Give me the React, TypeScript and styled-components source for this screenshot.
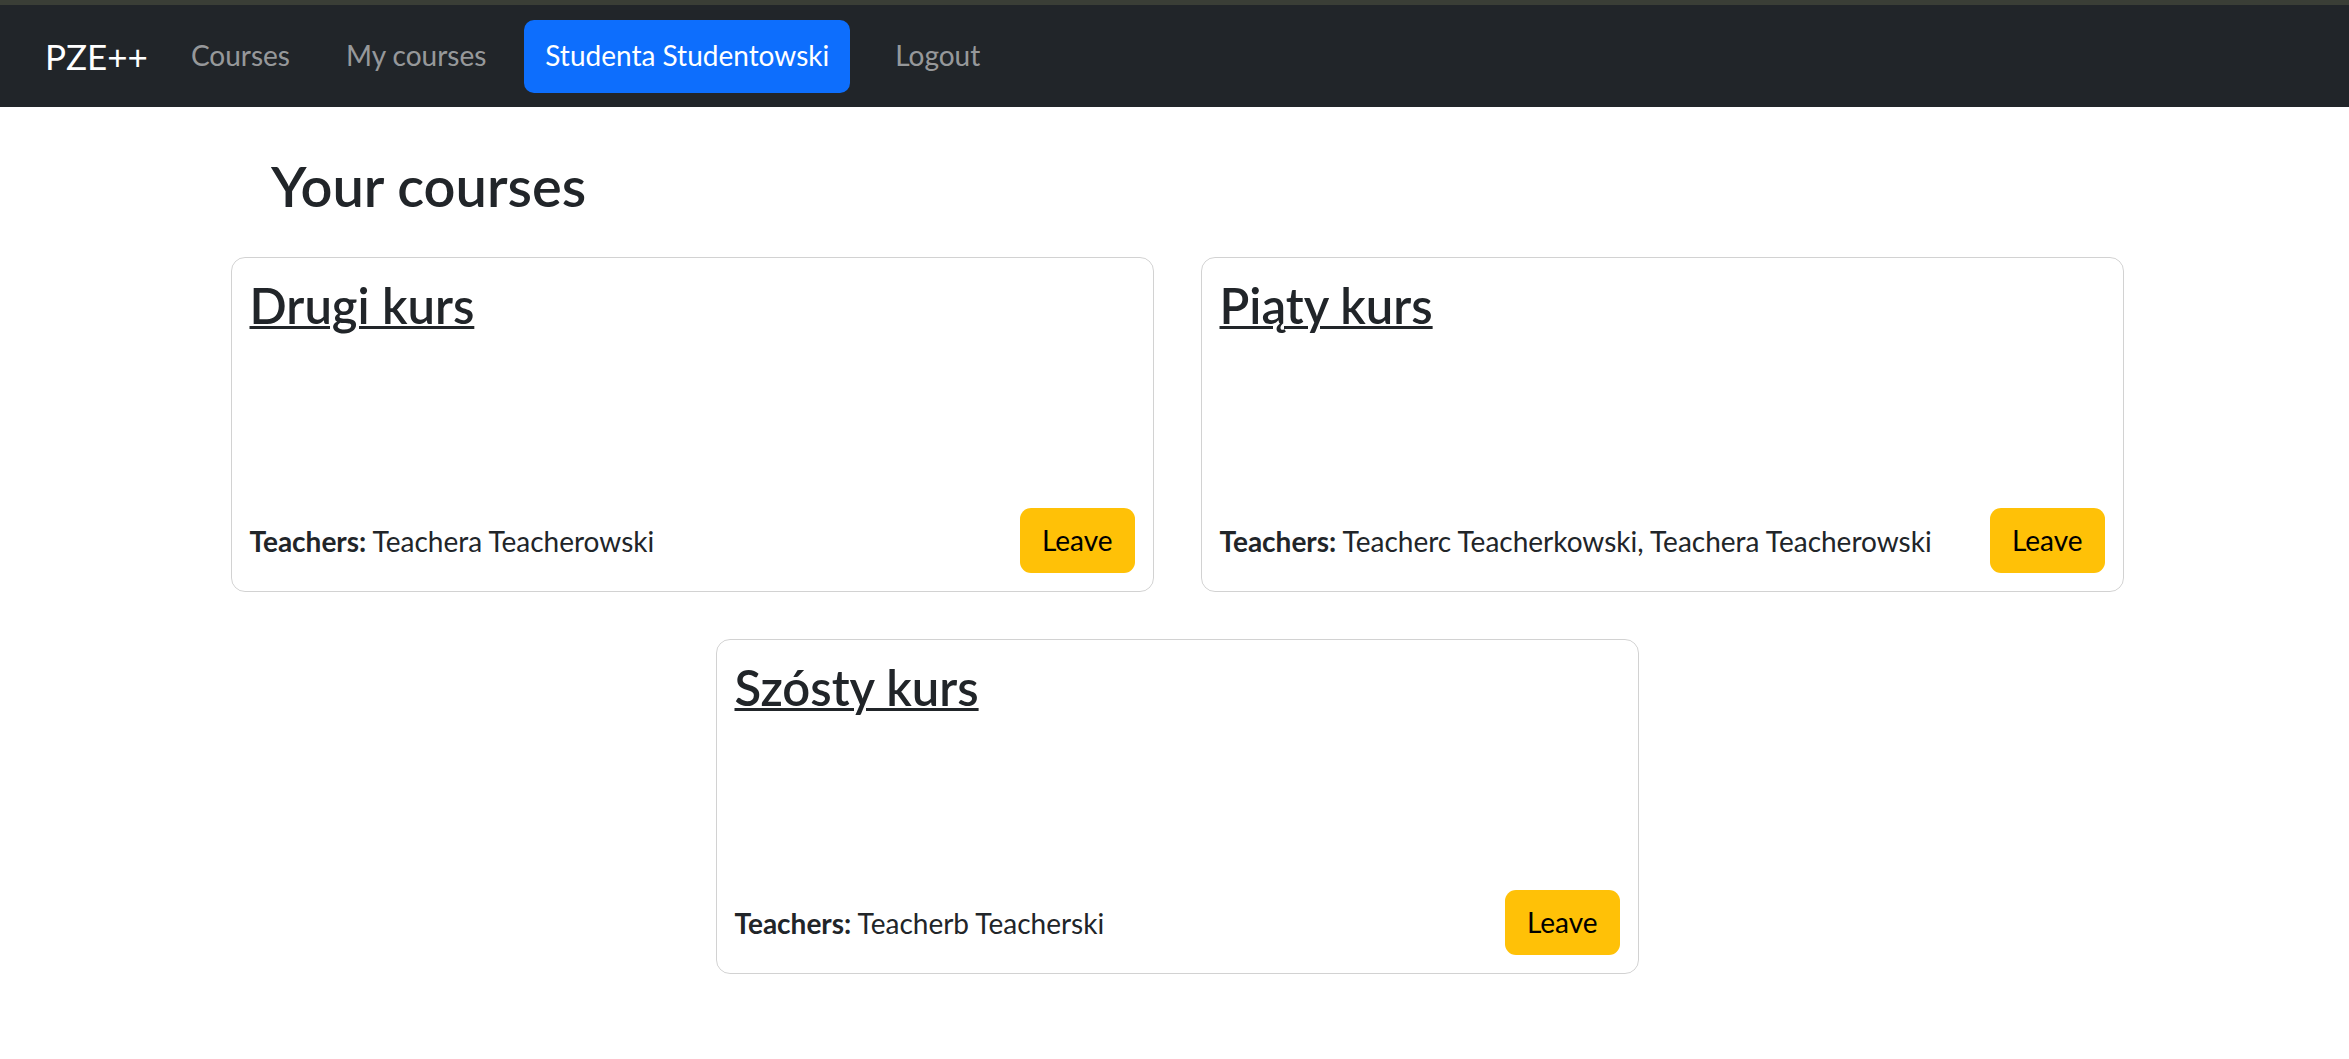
import React from "react";
import styled, { createGlobalStyle } from "styled-components";

const GlobalStyle = createGlobalStyle`
  * {
    box-sizing: border-box;
  }

  html,
  body {
    margin: 0;
    padding: 0;
    background: #fff;
  }

  body {
    font-family: Lato, "Noto Sans", sans-serif;
    font-size: 28px;
    line-height: 1.2;
    color: #212529;
  }
`;

const TopEdge = styled.div`
  height: 5px;
  background-color: #3a3e36;
`;

const Navbar = styled.nav`
  display: flex;
  align-items: center;
  height: 102px;
  padding: 0 45px;
  background-color: #212529;
`;

const Brand = styled.a`
  font-size: 35px;
  color: #fff;
  text-decoration: none;
  margin-right: 22px;
`;

const NavList = styled.ul`
  display: flex;
  align-items: center;
  gap: 14px;
  list-style: none;
  margin: 0;
  padding: 0;
`;

const NavLink = styled.a<{ $active?: boolean }>`
  display: flex;
  align-items: center;
  height: 73px;
  padding: 0 21px;
  margin: ${({ $active }) => ($active ? "0 10px 0 3px" : "0")};
  border-radius: 10px;
  font-size: 28px;
  text-decoration: none;
  color: ${({ $active }) => ($active ? "#fff" : "rgba(255, 255, 255, 0.55)")};
  background-color: ${({ $active }) => ($active ? "#0d6efd" : "transparent")};
`;

const Main = styled.main`
  width: 1940px;
  margin-left: 207px;
`;

const Heading = styled.h2`
  margin: 45px 0 14px 64px;
  font-size: 56px;
  font-weight: 600;
  line-height: 1.2;
`;

const CardGrid = styled.div`
  display: flex;
  flex-wrap: wrap;
  justify-content: center;
`;

const Card = styled.div`
  display: flex;
  flex-direction: column;
  justify-content: space-between;
  width: 923px;
  height: 335px;
  margin: 23.5px;
  padding: 18px;
  border: 1px solid rgba(0, 0, 0, 0.175);
  border-radius: 14px;
`;

const Title = styled.h3`
  margin: 0;
  font-size: 49px;
  font-weight: 600;
  line-height: 1.2;

  a {
    color: inherit;
    text-decoration: underline;
    text-decoration-thickness: 3px;
  }
`;

const Footer = styled.div`
  display: flex;
  align-items: center;
  justify-content: space-between;
`;

const Teachers = styled.span`
  padding-top: 4px;
  font-size: 28px;

  b {
    font-weight: 700;
  }
`;

const LeaveButton = styled.button`
  height: 65px;
  padding: 0 22px;
  border: none;
  border-radius: 11px;
  background-color: #ffc107;
  color: #000;
  font-family: inherit;
  font-size: 28px;
`;

interface Course {
  id: number;
  name: string;
  teachers: string[];
}

const courses: Course[] = [
  { id: 2, name: "Drugi kurs", teachers: ["Teachera Teacherowski"] },
  {
    id: 5,
    name: "Piąty kurs",
    teachers: ["Teacherc Teacherkowski", "Teachera Teacherowski"],
  },
  { id: 6, name: "Szósty kurs", teachers: ["Teacherb Teacherski"] },
];

function CourseCard({ course }: { course: Course }) {
  return (
    <Card>
      <Title>
        <a href={`#/course/${course.id}`}>{course.name}</a>
      </Title>
      <Footer>
        <Teachers>
          <b>Teachers:</b> {course.teachers.join(", ")}
        </Teachers>
        <LeaveButton>Leave</LeaveButton>
      </Footer>
    </Card>
  );
}

function App() {
  return (
    <>
      <GlobalStyle />
      <TopEdge />
      <Navbar>
        <Brand href="#/">PZE++</Brand>
        <NavList>
          <li>
            <NavLink href="#/courses">Courses</NavLink>
          </li>
          <li>
            <NavLink href="#/my-courses">My courses</NavLink>
          </li>
          <li>
            <NavLink href="#/profile" $active>
              Studenta Studentowski
            </NavLink>
          </li>
          <li>
            <NavLink href="#/logout">Logout</NavLink>
          </li>
        </NavList>
      </Navbar>
      <Main>
        <Heading>Your courses</Heading>
        <CardGrid>
          {courses.map((course) => (
            <CourseCard key={course.id} course={course} />
          ))}
        </CardGrid>
      </Main>
    </>
  );
}

export default App;
